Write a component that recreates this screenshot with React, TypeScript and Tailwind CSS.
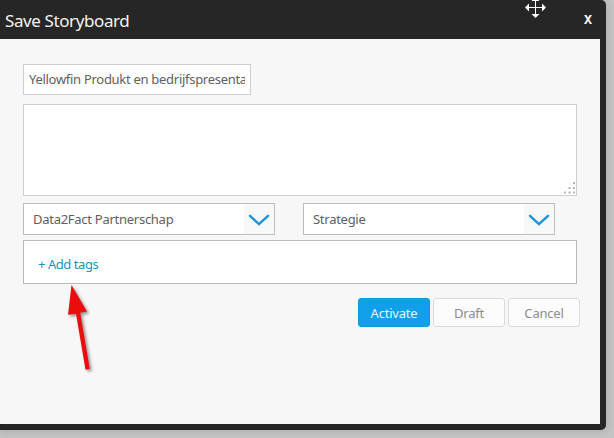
import clsx from 'clsx';

function Chevron() {
  return (
    <svg className="mt-px h-3 w-[22px]" viewBox="0 0 22 12" fill="none" stroke="#1b95d4" strokeWidth="2.4" strokeLinecap="round">
      <path d="M2 1.8 11 10.2 20 1.8" />
    </svg>
  );
}

function Select({ value }: { value: string }) {
  return (
    <button className="flex h-8 w-[252px] items-center justify-between border border-[#bdbdbd] bg-white pl-[9px] text-left">
      <span className="pt-0.5 tracking-[-0.27px]">{value}</span>
      <span className="flex h-full w-[30px] items-center justify-center bg-[#f7f8fa]">
        <Chevron />
      </span>
    </button>
  );
}

function ActionButton({ label, primary }: { label: string; primary?: boolean }) {
  return (
    <button
      className={clsx(
        'h-[29px] w-[72px] rounded-[3px] border pt-[3px] text-[13px] tracking-[-0.2px]',
        primary ? 'border-[#0d98e0] bg-[#109fe8] text-[#e2f5ff]' : 'border-[#dadada] bg-[#fcfcfc] text-[#8b8b8b]',
      )}
    >
      {label}
    </button>
  );
}

function MoveCursor() {
  return (
    <svg className="absolute -top-[3px] left-[525px] h-[21px] w-[21px]" viewBox="0 0 21 21" fill="#fff">
      <path d="M10 3h1v7h7v1h-7v7h-1v-7H3v-1h7z" />
      <path d="M10.5 0 14.5 4h-8zM10.5 21l4-4h-8zM0 10.5l4-4v8zM21 10.5l-4-4v8z" />
    </svg>
  );
}

function Arrow() {
  return (
    <svg
      className="absolute top-[280px] left-[60px] h-[100px] w-[40px] drop-shadow-[2px_2px_1.5px_rgba(0,0,0,0.4)]"
      viewBox="0 0 40 100"
      fill="#ec0c0c"
    >
      <path d="M11.5 5 27 31.5l-6.8 1.3L29.8 89l-4.3.8-9.5-56-8 1z" />
    </svg>
  );
}

export default function App() {
  return (
    <div className="relative h-[438px] w-[614px] overflow-hidden bg-[#c3c3c3] font-['Noto_Sans',sans-serif] text-[13px] text-[#606060]">
      <div className="flex h-[430px] w-[606px] flex-col rounded-r-[5px] bg-[#262626] pr-1.5 pb-1.5 shadow-[0_0_8px_rgba(0,0,0,0.15)]">
        <header className="flex h-[39px] shrink-0 items-center justify-between pr-2 pl-[5px]">
          <h1 className="pt-0.5 text-[17px] tracking-[-0.4px] text-[#f4f4f4]">Save Storyboard</h1>
          <button className="text-[12px] font-bold text-white">X</button>
        </header>

        <main className="flex-1 bg-[#f7f7f7] pt-[25px] pl-[23px]">
          <div className="h-[31px] w-[228px] border border-[#cfcfcf] bg-white px-[5px]">
            <div className="overflow-hidden leading-[29px] tracking-[-0.29px] whitespace-nowrap">Yellowfin Produkt en bedrijfspresenta</div>
          </div>

          <div className="mt-[9px] flex h-[92px] w-[554px] items-end justify-end border border-[#cfcfcf] bg-white p-px">
            <svg className="h-3 w-3" viewBox="0 0 12 12" fill="#b5b5b5">
              <path d="M10 0h2v2h-2zM5.5 5h2v2h-2zM10 5h2v2h-2zM1 9.5h2v2H1zM5.5 9.5h2v2h-2zM10 9.5h2v2h-2z" />
            </svg>
          </div>

          <div className="mt-[7px] flex gap-7">
            <Select value="Data2Fact Partnerschap" />
            <Select value="Strategie" />
          </div>

          <div className="mt-[5px] flex h-11 w-[554px] items-center border border-[#b9b9b9] bg-white pt-1.5 pl-3.5">
            <a className="tracking-[-0.45px] text-[#1791c5]">+ Add tags</a>
          </div>

          <div className="mt-3.5 ml-[335px] flex gap-[3px]">
            <ActionButton label="Activate" primary />
            <ActionButton label="Draft" />
            <ActionButton label="Cancel" />
          </div>
        </main>
      </div>

      <MoveCursor />
      <Arrow />
    </div>
  );
}
